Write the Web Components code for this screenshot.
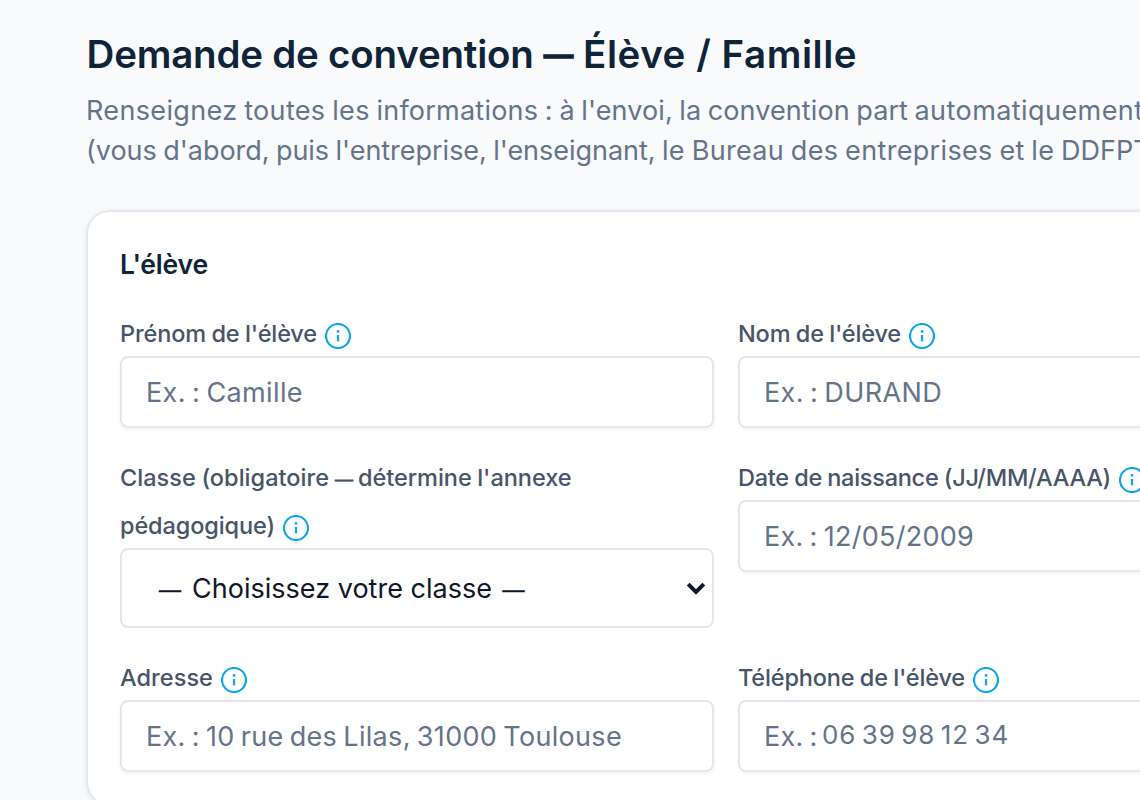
<!DOCTYPE html>
<html lang="fr">
<head>
<meta charset="utf-8">
<title>Demande de convention</title>
<style>
html,body{margin:0;height:100%;overflow:hidden;background:#f9fafc;font-family:Inter,"Liberation Sans",sans-serif}
</style>
</head>
<body>
<convention-page></convention-page>
<script>
// Text run whose tracking is adjusted so that its advance equals the "w" attribute.
customElements.define('text-run', class extends HTMLElement {
  connectedCallback() {
    const r = this.attachShadow({mode: 'open'});
    r.innerHTML = '<style>:host{display:inline-block;white-space:pre}</style><slot></slot>';
    const w = parseFloat(this.getAttribute('w'));
    if (!w) return;
    const n = this.textContent.length;
    const natural = this.getBoundingClientRect().width;
    const ls = (w - natural) / n;
    this.style.letterSpacing = ls.toFixed(3) + 'px';
  }
});

customElements.define('long-dash', class extends HTMLElement {
  connectedCallback() {
    this.attachShadow({mode: 'open'}).innerHTML =
      '<style>:host{display:inline-block;font-family:"Liberation Sans",sans-serif;line-height:1;letter-spacing:0}</style>—';
  }
});

customElements.define('info-icon', class extends HTMLElement {
  connectedCallback() {
    this.attachShadow({mode: 'open'}).innerHTML = `
      <style>:host{display:inline-block;width:26px;height:26px;vertical-align:-7px;line-height:0}svg{display:block}</style>
      <svg width="26" height="26" viewBox="0 0 26 26" fill="none" stroke="#0ea5e9">
        <circle cx="13" cy="13" r="12" stroke-width="2.2"/>
        <path d="M13 12v6.4" stroke-width="2.2"/>
        <circle cx="13" cy="8.4" r="1.35" fill="#0ea5e9" stroke="none"/>
      </svg>`;
  }
});

customElements.define('form-field', class extends HTMLElement {
  connectedCallback() {
    this.attachShadow({mode: 'open'}).innerHTML = `
      <style>
        :host{display:block}
        .label{padding-top:2px;margin-bottom:-2px;line-height:48px;font-size:23.5px;font-weight:500;color:#475569;white-space:nowrap;word-spacing:-.7px}
        .box{box-sizing:border-box;height:72px;border:2px solid #e2e8f0;border-radius:8px;background:#fff;padding:1px 0 0 24px;
          font-size:27px;line-height:68px;color:#64748b;white-space:nowrap;word-spacing:-1.8px;box-shadow:0 2px 4px rgba(15,23,42,.05)}
        :host([kind=select]) .box{height:80px;line-height:76px;padding:0 6px 0 37px;color:#0f172a;box-shadow:none;word-spacing:0;
          display:flex;justify-content:space-between;align-items:center}
        :host([kind=select]) .box div{padding-top:2px}
        svg{display:none}
        :host([kind=select]) svg{display:block}
      </style>
      <div class="label"><slot name="label"></slot></div>
      <div class="box"><div><slot></slot></div>
        <svg width="20" height="16" viewBox="0 0 20 16" fill="none" stroke="#0f172a" stroke-width="4"><path d="M2.2 4.2 10 12l7.8-7.8"/></svg>
      </div>`;
  }
});

customElements.define('form-card', class extends HTMLElement {
  connectedCallback() {
    this.attachShadow({mode: 'open'}).innerHTML = `
      <style>
        :host{display:block;box-sizing:border-box;width:1280px;margin-top:39px;padding:34px 32px 32px;background:#fff;
          border:2px solid #e2e8f0;border-radius:24px;box-shadow:0 2px 6px rgba(15,23,42,.07)}
        h2{margin:0 0 26px;font-size:26.5px;font-weight:600;line-height:36px;color:#0f2438}
        .grid{display:grid;grid-template-columns:594px 594px;gap:24px;align-items:start}
      </style>
      <h2><slot name="title"></slot></h2>
      <div class="grid"><slot></slot></div>`;
  }
});

customElements.define('convention-page', class extends HTMLElement {
  connectedCallback() {
    this.attachShadow({mode: 'open'}).innerHTML = `
      <style>
        :host{display:block;height:800px;overflow:hidden;box-sizing:border-box;padding:29px 0 0 86px}
        h1{margin:0;height:50px;line-height:50px;font-size:38.5px;font-weight:600;color:#0f2438;white-space:nowrap}
        h1 text-run{position:relative;left:.6px}
        h1 long-dash{font-size:29px;font-weight:700;vertical-align:3.5px;margin:0 9.5px 0 11px;-webkit-text-stroke:1.6px #0f2438}
        p{margin:12px 0 0;font-size:27px;line-height:40px;color:#64748b;white-space:nowrap;word-spacing:-1.2px}
        info-icon{margin-left:8px}
        .lab long-dash{font-size:18px;margin:0 5px 0 6px;vertical-align:1px;-webkit-text-stroke:.7px #475569}
        .sel long-dash{font-size:22px;vertical-align:1px;-webkit-text-stroke:.5px #0f172a}
        .phone{font-size:26px;position:relative;top:-2px;margin-left:4.5px;word-spacing:-2.5px}
      </style>
      <h1><text-run w="447">Demande de convention</text-run><long-dash></long-dash><text-run w="274">Élève / Famille</text-run></h1>
      <p><text-run w="290.5">Renseignez toutes les </text-run><text-run w="183">informations : </text-run><text-run w="355">à l'envoi, la convention part </text-run><text-run w="229">automatiquement</text-run><br><text-run w="576">(vous d'abord, puis l'entreprise, l'enseignant, </text-run><text-run w="399">le Bureau des entreprises et le </text-run><text-run>DDFPT</text-run></p>
      <form-card>
        <text-run slot="title" w="88">L'élève</text-run>
        <form-field><span slot="label"><text-run w="197">Prénom de l'élève</text-run><info-icon></info-icon></span><text-run w="157">Ex. : Camille</text-run></form-field>
        <form-field><span slot="label"><text-run w="163">Nom de l'élève</text-run><info-icon></info-icon></span><text-run w="178">Ex. : DURAND</text-run></form-field>
        <form-field kind="select"><span slot="label" class="lab"><text-run w="209">Classe (obligatoire</text-run><long-dash></long-dash><text-run w="213.5">détermine l'annexe</text-run><br><text-run w="155">pédagogique)</text-run><info-icon></info-icon></span><span class="sel"><long-dash></long-dash><text-run w="300" style="margin:0 10.5px 0 11px">Choisissez votre classe</text-run><long-dash></long-dash></span></form-field>
        <form-field><span slot="label"><text-run w="373">Date de naissance (JJ/MM/AAAA)</text-run><info-icon></info-icon></span><text-run w="210">Ex. : 12/05/2009</text-run></form-field>
        <form-field><span slot="label"><text-run w="93">Adresse</text-run><info-icon></info-icon></span><text-run w="476">Ex. : 10 rue des Lilas, 31000 Toulouse</text-run></form-field>
        <form-field><span slot="label"><text-run w="227">Téléphone de l'élève</text-run><info-icon></info-icon></span><text-run w="53.5">Ex. :</text-run><text-run class="phone" w="187">06 39 98 12 34</text-run></form-field>
      </form-card>`;
  }
});
</script>
</body>
</html>
